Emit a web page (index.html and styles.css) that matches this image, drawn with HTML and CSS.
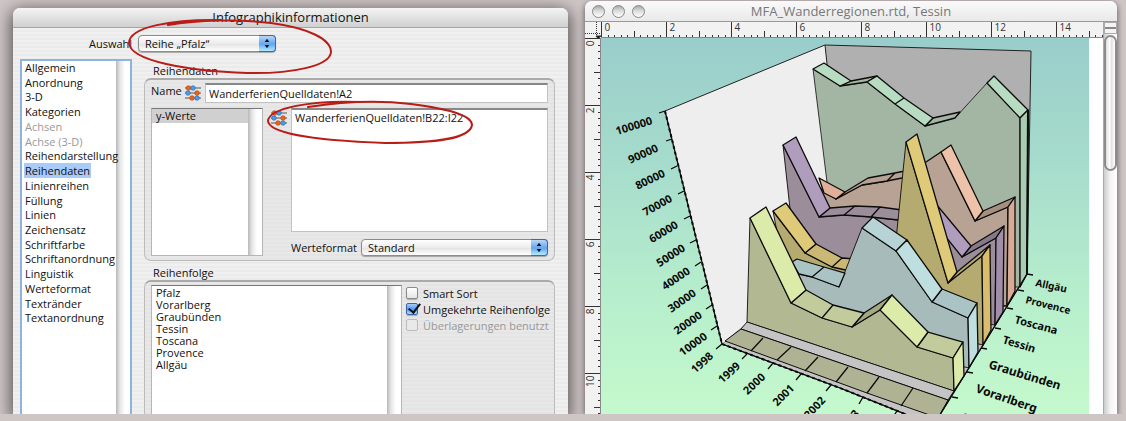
FILE: index.html
```html
<!doctype html>
<html lang="de">
<head>
<meta charset="UTF-8" />
<meta name="viewport" content="width=device-width,initial-scale=1" />
<title>Infographikinformationen</title>
<link rel="stylesheet" href="styles.css">
</head>
<body>

<svg width="0" height="0" class="defs">
	<symbol id="sliders" viewBox="0 0 16 16">
		<path d="M0 3h16M0 8h16M0 13h16" stroke="#555" stroke-width="1"/>
		<g stroke-width=".6">
			<g fill="#f4620f" stroke="#a84409"><circle cx="3.500" cy="3" r="2.300"/><circle cx="12" cy="8" r="2.300"/><circle cx="7" cy="13" r="2.300"/></g>
			<g fill="#4a9df0" stroke="#24629f"><circle cx="8" cy="3" r="2.300"/><circle cx="3" cy="8" r="2.300"/><circle cx="12" cy="13" r="2.300"/></g>
		</g>
	</symbol>
	<symbol id="arrows" viewBox="0 0 16 16">
		<path d="M5.500 6.500L8 3l2.500 3.500zM5.500 9.500L8 13l2.500-3.500z" fill="#111"/>
	</symbol>
</svg>

<main class="desktop">
	<section class="window dialog">
		<h1 class="titlebar">Infographikinformationen</h1>
		<div class="choose">
			<label for="auswahl">Auswahl</label>
			<div class="popup popup-row">
				<select id="auswahl"><option>Reihe „Pfalz“</option></select>
				<svg class="arrows"><use href="#arrows"/></svg>
				<svg class="mark mark-row" viewBox="0 0 210 60" fill="none" stroke="#b81d17" stroke-width="2" stroke-linecap="round">
					<path d="M42 8C72 3 112 2 145 6C182 11 205 22 205 35C204 49 166 57 121 56C62 54 4 44 3 26C3 10 46 2 96 3"/>
				</svg>
			</div>
		</div>
		<div class="columns">
			<nav class="list categories">
				<ul>
					<li><a href="#">Allgemein</a></li>
					<li><a href="#">Anordnung</a></li>
					<li><a href="#">3-D</a></li>
					<li><a href="#">Kategorien</a></li>
					<li class="off">Achsen</li>
					<li class="off">Achse (3-D)</li>
					<li><a href="#">Reihendarstellung</a></li>
					<li><a href="#" class="active">Reihendaten</a></li>
					<li><a href="#">Linienreihen</a></li>
					<li><a href="#">Füllung</a></li>
					<li><a href="#">Linien</a></li>
					<li><a href="#">Zeichensatz</a></li>
					<li><a href="#">Schriftfarbe</a></li>
					<li><a href="#">Schriftanordnung</a></li>
					<li><a href="#">Linguistik</a></li>
					<li><a href="#">Werteformat</a></li>
					<li><a href="#">Textränder</a></li>
					<li><a href="#">Textanordnung</a></li>
				</ul>
			</nav>
			<div class="panels">
				<h2>Reihendaten</h2>
				<div class="group">
					<div class="name">
						<label for="name">Name</label>
						<svg class="sliders"><use href="#sliders"/></svg>
						<input type="text" id="name" value="WanderferienQuelldaten!A2">
					</div>
					<div class="values">
						<ul class="list series"><li class="active">y-Werte</li></ul>
						<svg class="sliders"><use href="#sliders"/></svg>
						<div class="source">
							<div class="area">
								<textarea aria-label="y-Werte" spellcheck="false">WanderferienQuelldaten!B22:I22</textarea>
								<svg class="mark mark-area" viewBox="0 0 212 48" fill="none" stroke="#b81d17" stroke-width="2" stroke-linecap="round">
									<path d="M43 8C75 3 113 1 146 5C184 10 207 16 207 26C205 40 170 44 120 44C63 42 4 36 3 22C4 9 46 1 96 3"/>
								</svg>
							</div>
							<div class="format">
								<label for="format">Werteformat</label>
								<div class="popup">
									<select id="format"><option>Standard</option></select>
									<svg class="arrows"><use href="#arrows"/></svg>
								</div>
							</div>
						</div>
					</div>
				</div>
				<h2>Reihenfolge</h2>
				<div class="group order">
					<ul class="list">
						<li>Pfalz</li>
						<li>Vorarlberg</li>
						<li>Graubünden</li>
						<li>Tessin</li>
						<li>Toscana</li>
						<li>Provence</li>
						<li>Allgäu</li>
					</ul>
					<div class="checks">
						<label><input type="checkbox">Smart Sort</label>
						<label><input type="checkbox" checked>Umgekehrte Reihenfolge</label>
						<label class="off"><input type="checkbox" disabled>Überlagerungen benutzt</label>
					</div>
				</div>
			</div>
		</div>
	</section>

	<section class="window document">
		<header class="titlebar">
			<div class="lights"><button aria-label="Schließen"></button><button aria-label="Ablegen"></button><button aria-label="Zoomen"></button></div>
			<h1>MFA_Wanderregionen.rtd, Tessin</h1>
		</header>
		<div class="sheet">
			<svg class="ruler corner" viewBox="0 0 16 16"><path d="M0 11.500h16M11.500 0v16" stroke-dasharray="1 1"/><path d="M11 14l5 0-3 2.500z"/></svg>
			<svg class="ruler top" id="ruler-x"></svg>
			<svg class="ruler left" id="ruler-y"></svg>
			<div class="page">
				<svg class="chart" viewBox="601 38 488 376" preserveAspectRatio="xMinYMin slice">
					<!-- Wände und Boden -->
					<g stroke="#222" stroke-width="1" stroke-linejoin="round">
						<path fill="#c5c4c5" d="M722 344L747 322L850 270L1027 274L938 418L915 418L840 388Z"/>
						<path fill="#efeeef" stroke="none" d="M665 111L825 45L850 270L748 322L722 344Z"/>
						<path fill="none" d="M665 111L825 45"/>
						<path fill="#b1b0b1" d="M825 45L1031 51L1027 274L850 280Z"/>
					</g>
					<g stroke="#0c0c0c" stroke-width="1.300" stroke-linejoin="round">
						<!-- Allgäu -->
						<g fill="#a3b6a4">
							<path stroke-width=".8" d="M813 69L840 86L867 82L895 104L925 126L955 118L987 83L1020 118L1020 287L840 287Z"/>
							<path d="M840 86L851 81L877 76L867 82ZM925 126L933 118L960 112L955 118Z"/>
							<path fill="#b7dcc2" d="M813 69L824 63L851 81L840 86ZM867 82L877 76L904 98L895 104ZM895 104L904 98L933 118L925 126ZM987 83L994 76L1028 110L1020 118Z"/>
							<path fill="#a9ccb2" d="M1020 118L1028 110L1027 274L1020 287Z"/>
							<path stroke-width="2" d="M1028 110L1027 274"/>
						</g>
						<!-- Provence -->
						<g fill="#b8a293">
							<path d="M820 188L836 199L862 185L887 181L926 162L941 152L975 221L1008 207L1007 306L840 300Z"/>
							<path d="M836 199L845 192L868 178L895 173L910 170L902 178L887 181L862 185ZM887 181L895 173"/>
							<path fill="#a78f80" d="M975 221L983 211L1015 197L1008 207Z"/>
							<path fill="#dfb097" d="M819 178L845 192L836 199L824 193Z"/>
							<path fill="#eec1a9" d="M941 152L951 145L983 211L975 221Z"/>
							<path fill="#d8ab94" d="M1008 207L1015 197L1015 291L1007 306Z"/>
						</g>
						<!-- Toscana -->
						<g fill="#9b8d9a">
							<path stroke-width=".9" d="M783 145L819 217L844 215L871 217L898 220L935 216L962 257L996 238L995 325L800 300Z"/>
							<path d="M819 217L830 208L855 206L880 207L902 210L898 220L871 217L844 215ZM844 215L855 206M871 217L880 207"/>
							<path fill="#85798a" d="M962 257L971 246L1004 226L996 238Z"/>
							<path fill="#b09dbe" d="M783 145L796 137L830 208L819 217ZM925 211L936 204L971 246L962 257Z"/>
							<path fill="#a18eaa" d="M996 238L1004 226L1003 312L995 325Z"/>
						</g>
						<!-- Tessin -->
						<g fill="#b5aa70">
							<path stroke-width=".9" d="M773 211L805 253L832 267L860 272L896 240L906 142L948 283L982 256L983 345L790 300Z"/>
							<path d="M948 283L957 272L990 245L982 256Z"/>
							<path fill="#cab874" d="M805 253L816 244L842 258L832 267ZM832 267L842 258L856 259L850 271Z"/>
							<path fill="#dfca79" d="M773 211L786 203L816 244L805 253ZM906 142L917 134L957 272L948 283Z"/>
							<path fill="#d9bd6c" d="M982 256L990 245L991 330L983 345Z"/>
						</g>
						<!-- Graubünden -->
						<g fill="#a7bbbb">
							<path stroke-width=".9" d="M793 262L799 274L812 277L839 287L862 228L896 251L932 302L968 318L969 368L810 330Z"/>
							<path fill="#aac4c6" d="M792 262L797 259L824 267L845 273L839 287L812 277L799 274ZM824 267L812 277M932 302L942 289L977 303L968 318Z"/>
							<path fill="#b7d3d6" d="M862 228L873 217L907 240L896 251Z"/>
							<path fill="#bfdedf" d="M896 251L907 240L942 289L932 302ZM968 318L977 303L978 352L969 368Z"/>
						</g>
						<!-- Pfalz -->
						<g fill="#b2b992">
							<path stroke-width=".9" d="M750 218L791 303L822 318L852 327L880 310L917 347L953 358L954 391L747 322Z"/>
							<path fill="#a3a883" d="M852 327L864 313L892 295L880 310Z"/>
							<path fill="#c2cb9c" d="M791 303L806 290L833 305L822 318ZM822 318L833 305L864 313L852 327ZM917 347L928 332L963 342L953 358Z"/>
							<path fill="#dcebaa" d="M750 218L766 207L806 290L791 303ZM880 310L892 295L928 332L917 347ZM953 358L963 342L964 376L954 391Z"/>
						</g>
						<!-- Bodenstreifen -->
						<path fill="#c5c4c5" stroke-width=".9" d="M747 322L954 391L948 400L741 329Z"/>
						<path fill="#b0b393" stroke-width="1" d="M741 329L948 400L938 418L867 393L725 341Z"/>
						<path fill="none" d="M763 338L751 351M791 347L777 360M818 357L805 371M848 367L836 382M879 377L867 393M913 388L901 406"/>
						<!-- Achsen -->
						<g fill="none">
							<path d="M665 111L722 344L840 388L915 418M1027 274L938 418"/>
							<path stroke-width="2" stroke-dasharray="3 3" d="M665 111L722 344L840 388L915 418"/>
							<path d="M665 111l-6 2M672 139l-6 2M677 166l-6 3M684 191l-6 3M690 216l-6 3M696 240l-6 3M701 262l-6 4M707 285l-6 4M712 305l-6 4M717 326l-6 4M722 344l-6 5M747 354l-5 5M773 363l-5 6M801 374l-5 6M831 385l-5 6M863 397l-4 7M897 411l-4 6"/>
							<path d="M1027 274l6 1M1018 290l6 1M1007 308l6 1M995 328l6 1M981 348l6 1M967 372l6 1M952 397l6 1"/>
						</g>
					</g>
					<g class="scale" text-anchor="end">
						<text transform="translate(653 124) rotate(-17)">100000</text>
						<text transform="translate(659 151) rotate(-24)">90000</text>
						<text transform="translate(666 176) rotate(-26)">80000</text>
						<text transform="translate(673 201) rotate(-29)">70000</text>
						<text transform="translate(679 227) rotate(-31)">60000</text>
						<text transform="translate(686 250) rotate(-33)">50000</text>
						<text transform="translate(691 273) rotate(-34)">40000</text>
						<text transform="translate(697 295) rotate(-35)">30000</text>
						<text transform="translate(703 317) rotate(-35)">20000</text>
						<text transform="translate(708 338) rotate(-36)">10000</text>
						<text transform="translate(714 357) rotate(-42)">1998</text>
						<text transform="translate(741 367) rotate(-42)">1999</text>
						<text transform="translate(766 378) rotate(-43)">2000</text>
						<text transform="translate(795 389) rotate(-45)">2001</text>
						<text transform="translate(826 401) rotate(-47)">2002</text>
						<text transform="translate(860 414) rotate(-48)">2003</text>
					</g>
					<g class="regions">
						<text class="far" transform="translate(1035 286) rotate(12)">Allgäu</text>
						<text class="far" transform="translate(1025 303) rotate(14)">Provence</text>
						<text class="mid" transform="translate(1014 323) rotate(15)">Toscana</text>
						<text class="mid" transform="translate(1002 343) rotate(17)">Tessin</text>
						<text transform="translate(988 368) rotate(17)">Graubünden</text>
						<text transform="translate(975 392) rotate(19)">Vorarlberg</text>
						<text transform="translate(961 421) rotate(20)">Pfalz</text>
					</g>
				</svg>
			</div>
			<div class="scrollbar"><span class="split"></span><span class="thumb"></span></div>
		</div>
	</section>
</main>

<script>
// Lineale: alle 2 Einheiten eine Zahl, dazwischen 10 Teilstriche
function ruler(id, step, max, vertical){
	var d = '', text = '';
	for (var i = 0; i <= max; i++) {
		var pos = Math.round(i * step / 10) + 0.5;
		var len = i % 10 == 0 ? 16 : (i % 5 == 0 ? 7 : 3);
		d += vertical ? 'M' + (16 - len) + ' ' + pos + 'h' + len : 'M' + pos + ' ' + (16 - len) + 'v' + len;
		if (i % 10 == 0) {
			text += vertical
				? '<text text-anchor="end" transform="translate(9 ' + (pos + 2) + ') rotate(-90)">' + i / 5 + '</text>'
				: '<text x="' + (pos + 3) + '" y="9">' + i / 5 + '</text>';
		}
	}
	document.getElementById(id).innerHTML = '<path d="' + d + '"/>' + text;
}
ruler('ruler-x', 65, 77, false);
ruler('ruler-y', 67, 56, true);
</script>
</body>
</html>
```
FILE: styles.css
```css
*{box-sizing:border-box;}
html,body,ul,h1,h2{margin:0;padding:0;}
li{list-style:none;}
a{color:inherit;text-decoration:none;}

body{
	height: 100vh;
	overflow: hidden;
	background: #cec5c5;
	color: #111;
	font: 11px/15px "Open Sans", "Noto Sans", sans-serif;
}

input,select,textarea,button{
	margin: 0;
	font: inherit;
	color: inherit;
	appearance: none;
	border-radius: 0;
}

.defs{position: absolute;}
.off{color: #999;}

.desktop{
	display: grid;
	grid-template-columns: 555fr 532fr;
	gap: 17px;
	height: calc(100vh - 7px);
	padding: 1px 9px 0 13px;
	overflow: hidden;
}

.window{
	display: flex;
	flex-direction: column;
	min-width: 0;
	min-height: 0;
	border-radius: 7px 7px 0 0;
	background: #eee;
}

/* Dialog */
.dialog{
	margin-top: 7px;
	background: repeating-linear-gradient(#f0f0f0 0 2px, #ebebeb 2px 4px);
	box-shadow: 0 4px 16px 2px rgba(0,0,0,.6);
}

.dialog .titlebar{
	height: 20px;
	border-bottom: 1px solid #a5a5a5;
	border-radius: 7px 7px 0 0;
	background: linear-gradient(#f4f4f4, #d0d0d0);
	font-size: 13px;
	font-weight: normal;
	line-height: 18px;
	text-align: center;
}

.choose{
	display: flex;
	align-items: center;
	gap: 7px;
	padding: 7px 0 7px 76px;
}

.choose label{width: 42px;}

.popup{
	position: relative;
	flex: 1;
	height: 17px;
}

.popup-row{
	flex: none;
	width: 138px;
}

.popup select{
	display: block;
	width: 100%;
	height: 17px;
	padding: 0 20px 0 6px;
	border: 1px solid #8c8c8c;
	border-radius: 4px;
	background: linear-gradient(#fff, #ececec 50%, #e2e2e2 51%, #fff);
	box-shadow: 0 1px 1px rgba(0,0,0,.3);
	line-height: 15px;
}

.arrows{
	position: absolute;
	top: 0;
	right: 0;
	width: 17px;
	height: 17px;
	border: 1px solid #4264b4;
	border-left: 0;
	border-radius: 0 4px 4px 0;
	background: linear-gradient(#b9d6f8, #69a9ee 50%, #5aa2ef 51%, #b4eaff);
	pointer-events: none;
}

.mark{
	position: absolute;
	z-index: 2;
	pointer-events: none;
}

.mark-row{
	left: -12px;
	top: -18px;
	width: 210px;
	height: 60px;
}

.mark-area{
	left: -26px;
	top: -9px;
	width: 212px;
	height: 48px;
}

.columns{
	display: flex;
	flex: 1;
	gap: 12px;
	min-height: 0;
	padding: 0 13px 0 7px;
}

/* Listen mit Rollbalkenrinne rechts */
.list{
	border: 1px solid #b5b5b5;
	border-top-color: #777;
	background: linear-gradient(90deg, #b8b8b8, #e6e6e6 4px, #fff 9px) right / 14px 100% no-repeat #fff;
}

.categories{
	width: 112px;
	padding: 0 0 0 3px;
	border: 2px solid #8db3de;
	border-bottom: 0;
}

.categories ul{
	display: grid;
	grid-auto-rows: 1fr;
	height: 265px;
	line-height: 14px;
}

.categories li{white-space: nowrap;}
.categories a.active{
	margin-left: -1px;
	padding: 0 1px;
	background: #a9cbfa;
}

.panels{
	display: flex;
	flex: 1;
	flex-direction: column;
	min-width: 0;
	padding-top: 4px;
}

.panels h2{
	padding-left: 9px;
	font-size: 11px;
	font-weight: normal;
	line-height: 15px;
}

.group{
	margin-bottom: 4px;
	padding: 3px 6px 4px;
	border: 1px solid #bcbcbc;
	border-top: 2px solid #aaa;
	border-radius: 7px;
	background: repeating-linear-gradient(#e8e8e8 0 2px, #e4e4e4 2px 4px);
}

.name{
	display: flex;
	gap: 4px;
	margin-bottom: 5px;
}

.name label{width: 30px;}

.sliders{
	flex: none;
	width: 16px;
	height: 16px;
	margin-top: 2px;
}

.name input{
	flex: 1;
	min-width: 0;
	height: 20px;
	padding: 0 3px;
	border: 1px solid #c2c2c2;
	border-top: 2px solid #888;
	background: #fff;
}

.values{
	display: flex;
	gap: 4px;
}

.series{
	width: 112px;
	margin-right: 4px;
}

.series .active{
	margin-right: 14px;
	padding-left: 4px;
	background: #d0d0d0;
	line-height: 14px;
}

.source{
	flex: 1;
	min-width: 0;
}

.area{position: relative;}

.area textarea{
	display: block;
	width: 100%;
	height: 124px;
	padding: 1px 3px;
	border: 1px solid #c2c2c2;
	border-top: 2px solid #888;
	background: #fff;
	line-height: 14px;
	outline: 0;
	resize: none;
}

.format{
	display: flex;
	align-items: center;
	gap: 4px;
	margin-top: 7px;
}

.order{
	display: flex;
	flex: 1;
	gap: 4px;
	margin: 0;
	padding-bottom: 0;
	border-bottom: 0;
	border-radius: 7px 7px 0 0;
}

.order .list{
	flex: 1;
	padding: 1px 0 0 4px;
	border-bottom: 0;
	line-height: 12px;
}

.checks{
	width: 142px;
	white-space: nowrap;
}

.checks label{
	display: flex;
	align-items: center;
	gap: 5px;
	height: 16px;
}

.checks input{
	flex: none;
	width: 12px;
	height: 12px;
	border: 1px solid #8a8a8a;
	border-radius: 2px;
	background: linear-gradient(#fff, #e6e6e6);
	box-shadow: 0 1px 1px rgba(0,0,0,.25);
}

.checks input:checked{
	border-color: #3f63a8;
	background: linear-gradient(#a9cdf5, #4f9af0 50%, #9fdcff);
}

.checks input:checked::after{
	content: "";
	display: block;
	width: 5px;
	height: 10px;
	margin: -3px 0 0 4px;
	border: solid #111;
	border-width: 0 2px 2px 0;
	transform: rotate(38deg);
}

.checks input:disabled{
	border-color: #bbb;
	background: #e9e9e9;
	box-shadow: none;
}

/* Dokumentfenster */
.document{
	box-shadow: 0 2px 6px rgba(0,0,0,.6);
}

.document .titlebar{
	display: grid;
	grid-template-columns: 60px 1fr 60px;
	align-items: center;
	height: 21px;
	border-bottom: 1px solid #999;
	border-radius: 7px 7px 0 0;
	background: linear-gradient(#fafafa, #e9e9e9);
}

.document h1{
	color: #777;
	font-size: 13px;
	font-weight: normal;
	line-height: 20px;
	text-align: center;
}

.lights{
	display: flex;
	gap: 7px;
	padding-left: 7px;
}

.lights button{
	width: 13px;
	height: 13px;
	padding: 0;
	border: 1px solid #888;
	border-radius: 50%;
	background: linear-gradient(#aaa, #dcdcdc 45%, #fff);
}

.sheet{
	display: grid;
	grid-template-columns: 16px 1fr 14px;
	grid-template-rows: 16px 1fr;
	flex: 1;
	min-height: 0;
}

.ruler{
	width: 100%;
	height: 100%;
	min-height: 0;
	background: #f2f2f2;
	fill: #333;
	font-size: 10px;
}

.ruler path{stroke: #333;}
.corner path + path{fill: #000;}

.top{border-bottom: 1px solid #888;}
.left{
	grid-row: 2;
	border-right: 1px solid #888;
}

.page{
	min-height: 0;
	padding-right: 14px;
	background: #fff;
	overflow: hidden;
}

.chart{
	display: block;
	width: 100%;
	height: 100%;
	background: linear-gradient(#99cdcb, #a6dccc 33%, #b7efcc 70%, #c5f9cd);
}

.scale,.regions{
	fill: #0a0a0a;
	font-family: "Noto Sans", sans-serif;
	font-weight: bold;
}

.scale{font-size: 11px;}
.regions{font-size: 12px;}
.regions .mid{font-size: 11px;}
.regions .far{font-size: 10px;}

.scrollbar{
	grid-column: 3;
	grid-row: 1 / 3;
	display: flex;
	flex-direction: column;
	gap: 1px;
	border-left: 1px solid #aaa;
	background: linear-gradient(90deg, #ccc, #f5f5f5 50%, #fff);
}

.split{
	height: 12px;
	border: 1px solid #aaa;
	background: linear-gradient(#f4f4f4 4px, #888 4px 6px, #f4f4f4 6px);
}

.thumb{
	height: 136px;
	border: 2px solid #8c8c8c;
	border-radius: 7px;
	background: linear-gradient(90deg, #ddd, #fff 40%, #e2e2e2 60%, #fff);
}
```
